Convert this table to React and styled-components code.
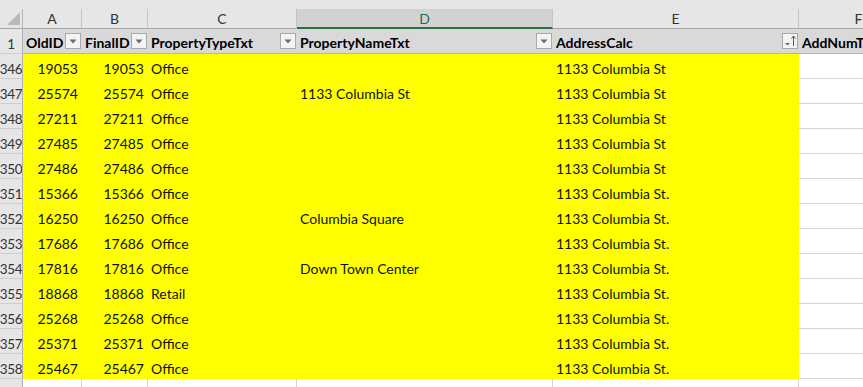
import React from "react";
import styled, { createGlobalStyle, css } from "styled-components";

const GlobalStyle = createGlobalStyle`
  html, body {
    margin: 0;
    padding: 0;
    background: #ffffff;
    overflow: hidden;
  }
  body {
    font-family: Lato, "Liberation Sans", sans-serif;
    font-size: 14px;
    color: #000;
  }
`;

const COLS = "23px 59px 66px 149px 256px 246px 120px";

const Sheet = styled.div`
  width: 863px;
  height: 387px;
  overflow: hidden;
  display: flex;
  flex-direction: column;
`;

const Row = styled.div`
  display: grid;
  grid-template-columns: ${COLS};
  height: ${(p) => p.$h || 25}px;
  flex: none;
  background: ${(p) => p.$bg || "transparent"};
  align-items: ${(p) => (p.$end ? "end" : "stretch")};
`;

const Corner = styled.div`
  height: 20px;
  box-sizing: border-box;
  border-right: 1px solid #b5b5b5;
  border-bottom: 1px solid #a8a8a8;
  display: flex;
  align-items: flex-end;
  justify-content: flex-end;
  padding: 0 2px 3px 0;
`;

const Triangle = styled.div`
  width: 0;
  height: 0;
  border-left: 13px solid transparent;
  border-bottom: 13px solid #b9b9b9;
`;

const ColHead = styled.div`
  height: 20px;
  box-sizing: border-box;
  border-right: 1px solid #c4c4c4;
  border-bottom: 1px solid #a8a8a8;
  display: flex;
  align-items: center;
  justify-content: center;
  padding-bottom: 1px;
  color: #333;
  font-size: 14px;
  ${(p) =>
    p.$selected &&
    css`
      background: #d2d2d2;
      color: #217346;
      border-bottom: 2px solid #217346;
      padding-bottom: 0;
    `}
`;

const RowHead = styled.div`
  box-sizing: border-box;
  background: #e6e6e6;
  border-right: 1px solid #b0b0b0;
  border-bottom: 1px solid #cdcdcd;
  display: flex;
  justify-content: center;
  align-items: flex-end;
  padding-bottom: 1px;
  overflow: hidden;
  white-space: nowrap;
  color: #333;
  font-size: 13.5px;
  letter-spacing: -0.3px;
  line-height: 16px;
`;

const HeadCell = styled.div`
  box-sizing: border-box;
  background: #d9d9d9;
  border-bottom: 1px solid #b3b3b3;
  display: flex;
  align-items: flex-end;
  padding: 0 1px 2px 3px;
  font-weight: bold;
  white-space: nowrap;
  overflow: hidden;
  line-height: 16px;
`;

const HeadLabel = styled.span`
  flex: 1;
  overflow: hidden;
`;

const FilterBtn = styled.div`
  flex: none;
  width: 16px;
  height: 16px;
  box-sizing: border-box;
  border: 1px solid #a9a9a9;
  background: #f4f4f4;
  margin-bottom: 2px;
  display: flex;
  align-items: center;
  justify-content: center;
`;

const Cell = styled.div`
  box-sizing: border-box;
  background: ${(p) => (p.$fill ? "#ffff00" : "#ffffff")};
  border-bottom: ${(p) => (p.$fill ? "none" : "1px solid #d4d4d4")};
  border-right: ${(p) => (p.$grid ? "1px solid #d4d4d4" : "none")};
  display: flex;
  align-items: flex-end;
  justify-content: ${(p) => (p.$right ? "flex-end" : "flex-start")};
  padding: ${(p) => (p.$right ? "0 4px 2px 0" : "0 0 2px 3px")};
  white-space: nowrap;
  overflow: hidden;
  line-height: 16px;
  color: #111;
`;

const DownArrow = () => (
  <svg width="8" height="5" viewBox="0 0 8 5">
    <path d="M0.5 0.5 L7.5 0.5 L4 4.5 Z" fill="#6b6b6b" />
  </svg>
);

const SortArrow = () => (
  <svg width="14" height="14" viewBox="0 0 14 14">
    <path d="M2 9 L7 9 L4.5 11.5 Z" fill="#6b6b6b" />
    <path d="M10.5 2 L10.5 12" stroke="#555" strokeWidth="1" />
    <path d="M8.5 4.5 L10.5 2 L12.5 4.5" stroke="#555" strokeWidth="1" fill="none" />
  </svg>
);

const columns = ["A", "B", "C", "D", "E", "F"];

const headers = [
  { label: "OldID" },
  { label: "FinalID" },
  { label: "PropertyTypeTxt" },
  { label: "PropertyNameTxt" },
  { label: "AddressCalc", sorted: true },
  { label: "AddNumTxt", noBtn: true },
];

const rows = [
  [346, 19053, "Office", "", "1133 Columbia St"],
  [347, 25574, "Office", "1133 Columbia St", "1133 Columbia St"],
  [348, 27211, "Office", "", "1133 Columbia St"],
  [349, 27485, "Office", "", "1133 Columbia St"],
  [350, 27486, "Office", "", "1133 Columbia St"],
  [351, 15366, "Office", "", "1133 Columbia St."],
  [352, 16250, "Office", "Columbia Square", "1133 Columbia St."],
  [353, 17686, "Office", "", "1133 Columbia St."],
  [354, 17816, "Office", "Down Town Center", "1133 Columbia St."],
  [355, 18868, "Retail", "", "1133 Columbia St."],
  [356, 25268, "Office", "", "1133 Columbia St."],
  [357, 25371, "Office", "", "1133 Columbia St."],
  [358, 25467, "Office", "", "1133 Columbia St."],
];

export default function App() {
  return (
    <>
      <GlobalStyle />
      <Sheet>
        <Row $h={29} $bg="#e6e6e6" $end>
          <Corner>
            <Triangle />
          </Corner>
          {columns.map((c) => (
            <ColHead key={c} $selected={c === "D"}>
              {c}
            </ColHead>
          ))}
        </Row>

        <Row>
          <RowHead>1</RowHead>
          {headers.map((h) => (
            <HeadCell key={h.label}>
              <HeadLabel>{h.label}</HeadLabel>
              {!h.noBtn && (
                <FilterBtn>{h.sorted ? <SortArrow /> : <DownArrow />}</FilterBtn>
              )}
            </HeadCell>
          ))}
        </Row>

        {rows.map(([n, id, type, name, addr]) => (
          <Row key={n}>
            <RowHead>{n}</RowHead>
            <Cell $fill $right>{id}</Cell>
            <Cell $fill $right>{id}</Cell>
            <Cell $fill>{type}</Cell>
            <Cell $fill>{name}</Cell>
            <Cell $fill>{addr}</Cell>
            <Cell />
          </Row>
        ))}

        <Row>
          <RowHead />
          {columns.map((c) => (
            <Cell key={c} $grid />
          ))}
        </Row>
      </Sheet>
    </>
  );
}
